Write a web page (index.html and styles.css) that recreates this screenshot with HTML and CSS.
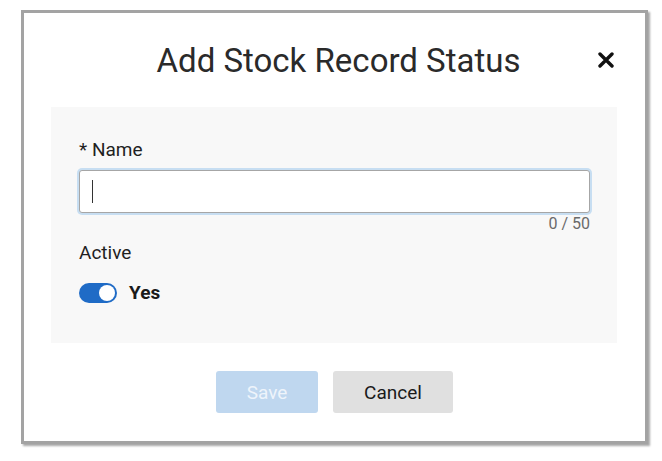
FILE: index.html
```html
<!DOCTYPE html>
<html>
<head>
<meta charset="utf-8">
<link rel="stylesheet" href="styles.css">
</head>
<body>
<div class="dialog">
  <div class="header">
    <span></span>
    <h1 class="title">Add Stock Record Status</h1>
    <button class="close" aria-label="Close">
      <svg width="16" height="16" viewBox="0 0 16 16"><path d="M2 2 L14 14 M14 2 L2 14" stroke="#111" stroke-width="3.4" stroke-linecap="round"/></svg>
    </button>
  </div>
  <div class="panel">
    <label class="label">* Name</label>
    <div class="input"><span class="caret"></span></div>
    <div class="counter">0 / 50</div>
    <div class="label active-label">Active</div>
    <div class="switch-row">
      <span class="switch"><span class="knob"></span></span>
      <span class="yes">Yes</span>
    </div>
  </div>
  <div class="footer">
    <button class="btn save">Save</button>
    <button class="btn cancel">Cancel</button>
  </div>
</div>
</body>
</html>
```
FILE: styles.css
```css
html, body { margin: 0; padding: 0; }
body {
  background: #fff;
  font-family: Roboto, "Liberation Sans", sans-serif;
  padding: 10px 0 0 21px;
  width: 662px; height: 461px; box-sizing: border-box; overflow: hidden;
}
.dialog {
  width: 621px;
  height: 428px;
  border: 3px solid #a3a3a3;
  box-shadow: 2px 2px 2px rgba(0,0,0,0.35);
  background: #fff;
  display: flex;
  flex-direction: column;
}
.header {
  height: 94px;
  display: grid;
  grid-template-columns: 1fr auto 1fr;
  align-items: start;
  padding: 0 31px 0 39px;
}
.title {
  margin: 28px 0 0 0;
  font-size: 33px;
  font-weight: 400;
  color: #2a2a2a;
  line-height: 40px;
  white-space: nowrap;
}
.close {
  justify-self: end;
  margin-top: 39px;
  background: none; border: 0; padding: 0;
  width: 16px; height: 16px;
  display: block;
}
.close svg { display: block; }
.panel {
  margin: 0 28px 0 27px;
  height: 236px;
  background: #f8f8f8;
  padding: 31px 27px 0 28px;
  box-sizing: border-box;
  display: flex;
  flex-direction: column;
}
.label {
  font-size: 19px;
  color: #1f1f1f;
  line-height: 24px;
}
.input {
  margin-top: 8px;
  height: 41px;
  border: 1px solid #a6a6a6;
  border-radius: 3px;
  background: #fff;
  box-shadow: 0 0 0 2px #c7def2;
  position: relative;
}
.caret {
  position: absolute;
  left: 12px; top: 9px;
  width: 1px; height: 23px;
  background: #333;
}
.counter {
  text-align: right;
  font-size: 16px;
  color: #6a6a6a;
  line-height: 18px;
  margin-top: 2px;
}
.active-label { margin-top: 8px; }
.switch-row {
  display: flex;
  align-items: center;
  gap: 12px;
  margin-top: 16px;
}
.switch {
  width: 38px; height: 20px;
  border-radius: 10px;
  background: #1f6bc6;
  position: relative;
  display: block;
}
.knob {
  position: absolute;
  right: 2px; top: 2px;
  width: 16px; height: 16px;
  border-radius: 50%;
  background: #fff;
}
.yes {
  font-size: 19px;
  font-weight: 700;
  color: #1a1a1a;
}
.footer {
  display: flex;
  justify-content: center;
  gap: 15px;
  padding-top: 28px;
}
.btn {
  height: 42px;
  border: 0;
  border-radius: 3px;
  font-family: Roboto, "Liberation Sans", sans-serif;
  font-size: 19px;
}
.save { width: 102px; background: #bfd7ef; color: #eef4fb; }
.cancel { width: 120px; background: #e0e0e0; color: #1a1a1a; }
```
